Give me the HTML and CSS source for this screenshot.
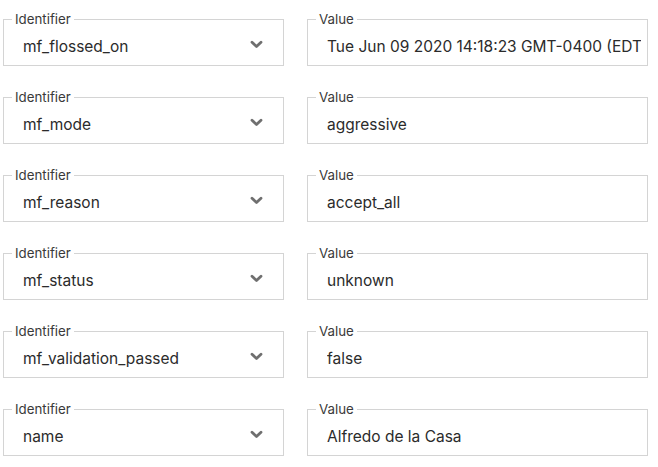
FILE: index.html
```html
<!DOCTYPE html>
<html lang="en">
  <head>
    <meta charset="UTF-8" />
    <title>Attributes</title>
    <link rel="stylesheet" href="styles.css">
  </head>
  <body>
    <div class="pairs">
      <fieldset class="field">
        <legend>Identifier</legend>
        <div class="field-row">
          <span class="field-text">mf_flossed_on</span>
          <svg class="chevron" width="13" height="9" viewBox="0 0 13 9"><path d="M2 2.2 L6.5 6.5 L11 2.2" /></svg>
        </div>
      </fieldset>
      <fieldset class="field">
        <legend>Value</legend>
        <div class="field-row">
          <span class="field-text">Tue Jun 09 2020 14:18:23 GMT-0400 (EDT)</span>
        </div>
      </fieldset>

      <fieldset class="field">
        <legend>Identifier</legend>
        <div class="field-row">
          <span class="field-text">mf_mode</span>
          <svg class="chevron" width="13" height="9" viewBox="0 0 13 9"><path d="M2 2.2 L6.5 6.5 L11 2.2" /></svg>
        </div>
      </fieldset>
      <fieldset class="field">
        <legend>Value</legend>
        <div class="field-row">
          <span class="field-text">aggressive</span>
        </div>
      </fieldset>

      <fieldset class="field">
        <legend>Identifier</legend>
        <div class="field-row">
          <span class="field-text">mf_reason</span>
          <svg class="chevron" width="13" height="9" viewBox="0 0 13 9"><path d="M2 2.2 L6.5 6.5 L11 2.2" /></svg>
        </div>
      </fieldset>
      <fieldset class="field">
        <legend>Value</legend>
        <div class="field-row">
          <span class="field-text">accept_all</span>
        </div>
      </fieldset>

      <fieldset class="field">
        <legend>Identifier</legend>
        <div class="field-row">
          <span class="field-text">mf_status</span>
          <svg class="chevron" width="13" height="9" viewBox="0 0 13 9"><path d="M2 2.2 L6.5 6.5 L11 2.2" /></svg>
        </div>
      </fieldset>
      <fieldset class="field">
        <legend>Value</legend>
        <div class="field-row">
          <span class="field-text">unknown</span>
        </div>
      </fieldset>

      <fieldset class="field">
        <legend>Identifier</legend>
        <div class="field-row">
          <span class="field-text">mf_validation_passed</span>
          <svg class="chevron" width="13" height="9" viewBox="0 0 13 9"><path d="M2 2.2 L6.5 6.5 L11 2.2" /></svg>
        </div>
      </fieldset>
      <fieldset class="field">
        <legend>Value</legend>
        <div class="field-row">
          <span class="field-text">false</span>
        </div>
      </fieldset>

      <fieldset class="field">
        <legend>Identifier</legend>
        <div class="field-row">
          <span class="field-text">name</span>
          <svg class="chevron" width="13" height="9" viewBox="0 0 13 9"><path d="M2 2.2 L6.5 6.5 L11 2.2" /></svg>
        </div>
      </fieldset>
      <fieldset class="field">
        <legend>Value</legend>
        <div class="field-row">
          <span class="field-text">Alfredo de la Casa</span>
        </div>
      </fieldset>
    </div>
  </body>
</html>
```

FILE: styles.css
```css
body {
  margin: 0;
  background: #fff;
  font-family: Inter, "Noto Sans", sans-serif;
  color: #2b2b2b;
}
.pairs {
  display: grid;
  grid-template-columns: 281px 341px;
  column-gap: 23px;
  row-gap: 23px;
  padding: 11px 0 0 3px;
}
.field {
  margin: 0;
  padding: 0 6px 0 8px;
  border: 1px solid #d4d4d4;
  min-width: 0;
}
.field legend {
  padding: 0 3px;
  font-size: 13.3px;
  line-height: 16px;
  color: #3a3a3a;
}
.field-row {
  display: flex;
  align-items: center;
  height: 38px;
  padding-left: 11px;
  overflow: hidden;
}
.field-text {
  flex: 1;
  font-size: 15.5px;
  white-space: nowrap;
  overflow: hidden;
}
.chevron {
  margin: 0 14px 4px 0;
  flex: none;
}
.chevron path {
  fill: none;
  stroke: #6f6f6f;
  stroke-width: 2.8;
  stroke-linecap: round;
  stroke-linejoin: round;
}
```
